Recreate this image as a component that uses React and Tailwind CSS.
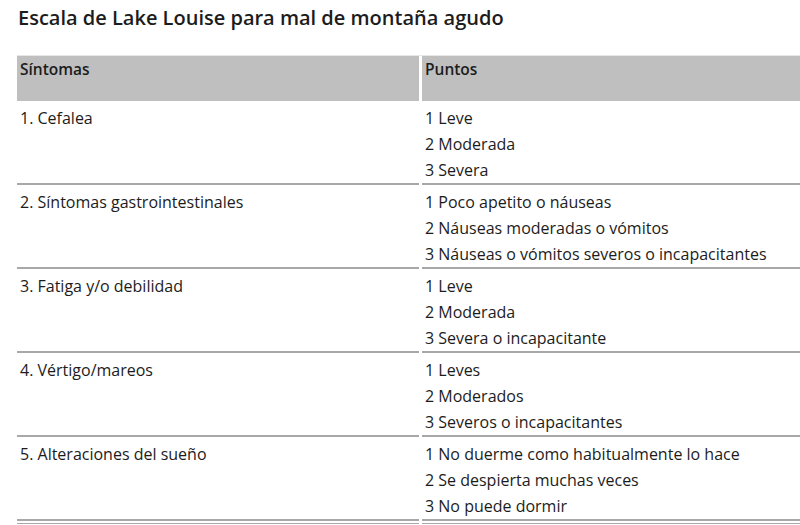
import React from 'react';

const rows = [
  { sintoma: '1. Cefalea', puntos: ['1 Leve', '2 Moderada', '3 Severa'] },
  {
    sintoma: '2. Síntomas gastrointestinales',
    puntos: ['1 Poco apetito o náuseas', '2 Náuseas moderadas o vómitos', '3 Náuseas o vómitos severos o incapacitantes'],
  },
  { sintoma: '3. Fatiga y/o debilidad', puntos: ['1 Leve', '2 Moderada', '3 Severa o incapacitante'] },
  { sintoma: '4. Vértigo/mareos', puntos: ['1 Leves', '2 Moderados', '3 Severos o incapacitantes'] },
  {
    sintoma: '5. Alteraciones del sueño',
    puntos: ['1 No duerme como habitualmente lo hace', '2 Se despierta muchas veces', '3 No puede dormir'],
  },
];

const App = () => {
  return (
    <div className="w-[800px] h-[525px] overflow-hidden bg-white text-[#1c1c1c] font-['Open_Sans',sans-serif]">
      <h1 className="pl-[18px] pt-[5px] text-[20px] leading-[26px] font-semibold">
        Escala de Lake Louise para mal de montaña agudo
      </h1>

      <div className="mt-[24px] pl-[17px]">
        <div className="grid grid-cols-[402px_378px] gap-x-[3px] h-[46px] border-t border-[#e6e6e6]">
          <div className="bg-[#bfbfbf] pl-[3px] text-[15.5px] leading-[26px] font-semibold">Síntomas</div>
          <div className="bg-[#bfbfbf] pl-[3px] text-[15.5px] leading-[26px] font-semibold">Puntos</div>
        </div>

        {rows.map((row) => (
          <div key={row.sintoma} className="grid grid-cols-[402px_378px] gap-x-[3px] h-[84px]">
            <div className="pl-[3px] pt-[4px] text-[16px] leading-[26px] border-b-2 border-[#a8a8a8]">
              {row.sintoma}
            </div>
            <div className="pl-[3px] pt-[4px] text-[16px] leading-[26px] border-b-2 border-[#a8a8a8]">
              {row.puntos.map((p) => (
                <div key={p}>{p}</div>
              ))}
            </div>
          </div>
        ))}
        <div className="grid grid-cols-[402px_378px] gap-x-[3px] mt-[2px]">
          <div className="border-t border-[#a8a8a8]" />
          <div className="border-t border-[#a8a8a8]" />
        </div>
      </div>
    </div>
  );
};

export default App;
